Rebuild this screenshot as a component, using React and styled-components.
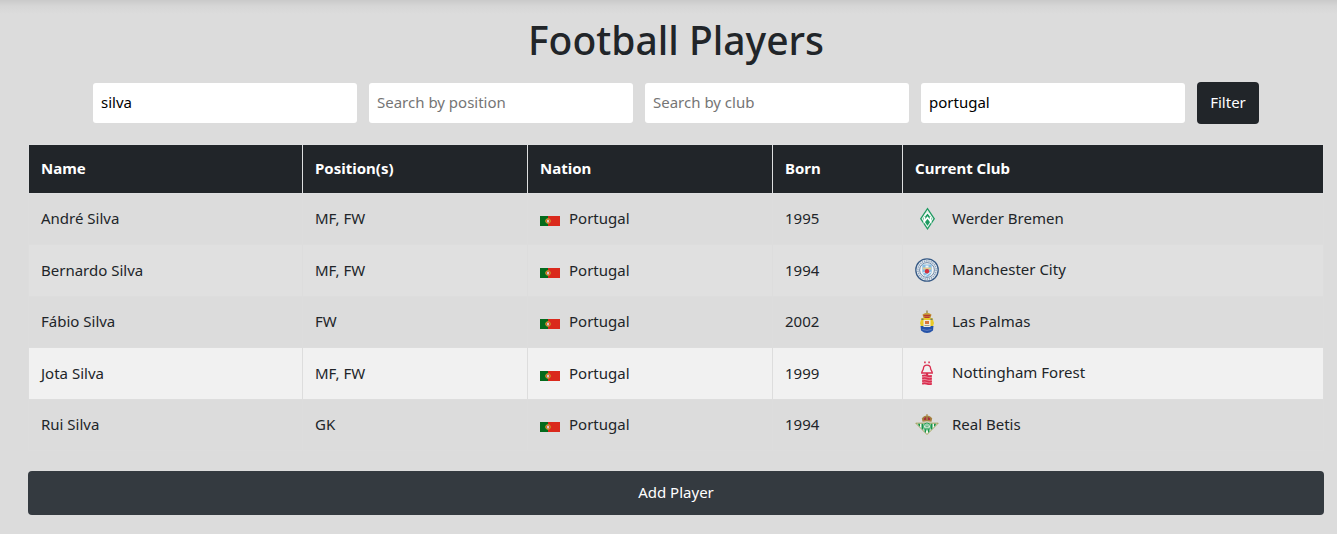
import React, { useState } from "react";
import styled, { createGlobalStyle } from "styled-components";

const GlobalStyle = createGlobalStyle`
  * { box-sizing: border-box; }
  body {
    margin: 0;
    background: #dcdcdc linear-gradient(#cacaca, #d6d6d6 6px, #dcdcdc 14px) no-repeat;
    color: #212529;
    font-family: "Noto Sans", "Open Sans", sans-serif;
    font-size: 15px;
    line-height: 24px;
  }
`;

const Page = styled.main`
  padding: 16px 13px 19px 28px;
`;

const Title = styled.h1`
  margin: 0 0 18px;
  font-size: 39px;
  font-weight: 500;
  line-height: 48px;
  text-align: center;
`;

const FilterBar = styled.form`
  display: flex;
  justify-content: center;
  align-items: center;
  gap: 12px;
  margin-bottom: 20px;
`;

const FilterInput = styled.input`
  flex: 0 1 264px;
  min-width: 0;
  height: 40px;
  padding: 0 8px 2px;
  border: 0;
  border-radius: 3px;
  background: #fff;
  color: #000;
  font: inherit;

  &::placeholder {
    color: #757575;
    opacity: 1;
  }
`;

const Button = styled.button`
  padding: 0 0 2px;
  border: 0;
  border-radius: 4px;
  color: #fff;
  font: inherit;
  cursor: pointer;
`;

const FilterButton = styled(Button)`
  width: 62px;
  height: 42px;
  background: #212529;
`;

const AddButton = styled(Button)`
  display: block;
  width: 100%;
  height: 44px;
  margin-top: 20px;
  background: #343a40;
`;

const Table = styled.table`
  width: 100%;
  border-collapse: collapse;
  table-layout: fixed;
`;

const Col = styled.col`
  width: ${(p) => p.$width || "auto"};
`;

const HeadCell = styled.th`
  height: 49px;
  padding: 0 12px 2px;
  border: 1px solid #dedfe0;
  background: #212529;
  color: #fff;
  font-weight: 700;
  text-align: left;
`;

const rowColors = { plain: "#dcdcdc", fading: "#e0e0e0", striped: "#f1f1f1" };

const Row = styled.tr`
  height: 51px;
  background: ${(p) => rowColors[p.$tone]};

  &:nth-child(even) {
    height: 52px;
  }
`;

const Cell = styled.td`
  padding: 0 12px 2px;
  border: 1px solid #dddddd;
  white-space: nowrap;
`;

const FlagSvg = styled.svg`
  width: 20px;
  height: 10px;
  margin-right: 9px;
  vertical-align: -2px;
`;

const CrestSvg = styled.svg`
  width: 24px;
  height: 24px;
  margin-right: 13px;
  vertical-align: -7px;
`;

const PortugalFlag = () => (
  <FlagSvg viewBox="0 0 20 10" aria-hidden="true">
    <rect width="20" height="10" fill="#da291c" />
    <rect width="8" height="10" fill="#046a1c" />
    <circle cx="8" cy="5" r="2.3" fill="#d83a20" stroke="#c9a92c" strokeWidth="1" />
    <rect x="7" y="3.8" width="2" height="2.6" fill="#dcc5cf" />
  </FlagSvg>
);

const WerderCrest = () => (
  <CrestSvg viewBox="0 0 24 24" aria-hidden="true">
    <path d="M12.5 .5 20 11.8l-7.5 11.3L5 11.8z" fill="#1d9a60" />
    <path d="M12.5 3.8 17.8 11.8l-5.3 8-5.3-8z" fill="none" stroke="#e7f3ed" strokeWidth="1.1" />
    <path d="M9.4 9.4v5.2l3.1-4 3.1 4V9.4" fill="none" stroke="#fff" strokeWidth="1.7" />
    <path d="m9.6 9 2.9-3.3L15.400 9" fill="none" stroke="#fff" strokeWidth="1.2" />
  </CrestSvg>
);

const CityCrest = () => (
  <CrestSvg viewBox="0 0 24 24" aria-hidden="true">
    <circle cx="12" cy="12" r="11.2" fill="#e8edf1" stroke="#385b86" strokeWidth="1.3" />
    <circle cx="12" cy="12" r="9.1" fill="none" stroke="#8fa5be" strokeWidth="1.6" strokeDasharray="1.3 .9" />
    <circle cx="12" cy="12" r="7.4" fill="#f3f4f3" stroke="#506f95" strokeWidth=".8" />
    <path d="M7.300 6.500h9.400v7.100c0 2.600-2 4.200-4.700 5.500-2.700-1.300-4.700-2.900-4.700-5.500z" fill="#86bce2" />
    <path d="M7.500 15.500l3-2M10 18l6-4" stroke="#e9f3fa" strokeWidth="1" />
    <path d="M8 9.500h8v2H8z" fill="#e3c98a" />
    <path d="M10.500 7.500h3v2h-3z" fill="#f3f4f3" />
    <circle cx="12" cy="13.300" r="2.200" fill="#d5303c" />
  </CrestSvg>
);

const PalmasCrest = () => (
  <CrestSvg viewBox="0 0 24 24" aria-hidden="true">
    <path d="M12 .5v4" stroke="#8c7b38" strokeWidth="1.200" />
    <path d="M7.500 4.500q4.500-3.500 9 0L15.500 8h-7z" fill="#c4a13a" />
    <path d="M8.500 5.500h7M9.500 7.500h5" stroke="#b73931" strokeWidth="1.300" />
    <path d="M6.500 8h11l1.500 5-1.500 5h-11L5 13z" fill="#e8c928" />
    <path d="M5.500 16h13l-.5 4.500q-6 5-12 0z" fill="#2452a8" />
    <path d="M8.500 10h7v7h-7z" fill="#f0eadb" />
    <path d="M10 11h4v3h-4z" fill="#d7763c" />
    <path d="M9.500 15.500h5" stroke="#9a9c89" />
    <path d="M7.500 19.500q4.500 1.800 9 0" fill="none" stroke="#6d87c4" strokeWidth=".8" />
    <path d="M6.500 8.500h2v1.500h-2zM15.500 8.500h2v1.500h-2z" fill="#6b7b72" />
  </CrestSvg>
);

const ForestCrest = () => (
  <CrestSvg viewBox="0 0 24 24" aria-hidden="true">
    <path d="M9 .5h1.800v1.700H9zM13.200.5H15v1.700h-1.800z" fill="#dd4763" />
    <path
      d="M12 4.200c-2.300 0-3.500 1.600-3.600 3.400-.1 1.600-1.800 2.600-1.700 4.400h10.600c.1-1.800-1.600-2.800-1.700-4.400-.1-1.800-1.300-3.400-3.600-3.400z"
      fill="none"
      stroke="#d92e4f"
      strokeWidth="1.300"
    />
    <path d="M12 12v3" stroke="#d92e4f" strokeWidth="2.400" />
    <path d="M7.200 14h9.600v9.500H7.200z" fill="#e98296" />
    <path
      d="M7.200 14.800q2.400-1 4.800 0t4.800 0M7.200 17.500q2.400-1 4.800 0t4.800 0M7.200 20.200q2.400-1 4.800 0t4.800 0M7.200 22.700q2.400-1 4.800 0t4.800 0"
      fill="none"
      stroke="#d92e4f"
      strokeWidth="1.500"
    />
  </CrestSvg>
);

const BetisCrest = () => (
  <CrestSvg viewBox="0 0 24 24" aria-hidden="true">
    <path d="M.8 10.200h22.400l-5.200 5.300-6 6-6-6z" fill="#f1f5ec" stroke="#9a9a4e" strokeWidth=".9" />
    <path
      d="M3.200 10.700h1.800v3l-1.800-1.700zM6.500 10.700h1.800v6.500l-1.800-1.700zM15.700 10.700h1.800v4.800l-1.800 1.700zM19 10.700h1.800v1.300L19 13.700zM9.500 16h1.500v4l-1.500-1.500zM13 16h1.500v2.500L13 20z"
      fill="#17954c"
    />
    <circle cx="12" cy="13.500" r="3.500" fill="#d9ecd9" stroke="#29a35a" strokeWidth="1" />
    <path d="M10 12h4M10.500 13.700h3M10 15.400h4" stroke="#35a263" strokeWidth=".8" />
    <path d="M7.500 8.800 6.800 5.300Q9 2.400 12 2.600q3-.2 5.200 2.700l-.7 3.500q-4.500-1.200-9 0z" fill="#a58442" />
    <path d="M8.600 5.800q1.200-1.600 2.600-1.800v3H9zM15.400 5.800Q14.200 4.200 12.800 4v3H15z" fill="#a62f3b" />
    <path d="M12 1v3" stroke="#a58442" />
  </CrestSvg>
);

const filterFields = [
  { key: "name", label: "Search by name", initial: "silva" },
  { key: "position", label: "Search by position", initial: "" },
  { key: "club", label: "Search by club", initial: "" },
  { key: "nation", label: "Search by nation", initial: "portugal" },
];

const columns = [
  { title: "Name", width: "274px" },
  { title: "Position(s)", width: "225px" },
  { title: "Nation", width: "245px" },
  { title: "Born", width: "130px" },
  { title: "Current Club" },
];

const players = [
  { name: "André Silva", positions: "MF, FW", born: 1995, club: "Werder Bremen", Crest: WerderCrest, tone: "plain" },
  { name: "Bernardo Silva", positions: "MF, FW", born: 1994, club: "Manchester City", Crest: CityCrest, tone: "fading" },
  { name: "Fábio Silva", positions: "FW", born: 2002, club: "Las Palmas", Crest: PalmasCrest, tone: "plain" },
  { name: "Jota Silva", positions: "MF, FW", born: 1999, club: "Nottingham Forest", Crest: ForestCrest, tone: "striped" },
  { name: "Rui Silva", positions: "GK", born: 1994, club: "Real Betis", Crest: BetisCrest, tone: "plain" },
];

export default function App() {
  const [filters, setFilters] = useState(
    Object.fromEntries(filterFields.map((f) => [f.key, f.initial]))
  );

  return (
    <>
      <GlobalStyle />
      <Page>
        <Title>Football Players</Title>
        <FilterBar onSubmit={(e) => e.preventDefault()}>
          {filterFields.map((f) => (
            <FilterInput
              key={f.key}
              type="text"
              aria-label={f.label}
              placeholder={f.label}
              value={filters[f.key]}
              onChange={(e) => setFilters({ ...filters, [f.key]: e.target.value })}
            />
          ))}
          <FilterButton type="submit">Filter</FilterButton>
        </FilterBar>
        <Table>
          <colgroup>
            {columns.map((c) => (
              <Col key={c.title} $width={c.width} />
            ))}
          </colgroup>
          <thead>
            <tr>
              {columns.map((c) => (
                <HeadCell key={c.title} scope="col">{c.title}</HeadCell>
              ))}
            </tr>
          </thead>
          <tbody>
            {players.map(({ name, positions, born, club, Crest, tone }) => (
              <Row key={name} $tone={tone}>
                <Cell>{name}</Cell>
                <Cell>{positions}</Cell>
                <Cell><PortugalFlag />Portugal</Cell>
                <Cell>{born}</Cell>
                <Cell><Crest />{club}</Cell>
              </Row>
            ))}
          </tbody>
        </Table>
        <AddButton type="button">Add Player</AddButton>
      </Page>
    </>
  );
}
